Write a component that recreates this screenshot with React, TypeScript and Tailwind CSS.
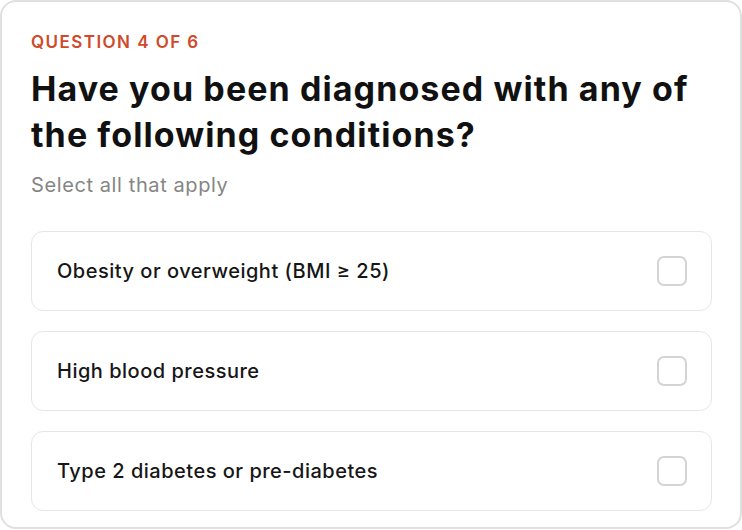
import { useState } from "react"

const options = [
  "Obesity or overweight (BMI ≥ 25)",
  "High blood pressure",
  "Type 2 diabetes or pre-diabetes",
]

export default function App() {
  const [checked, setChecked] = useState<string[]>([])

  const toggle = (label: string) =>
    setChecked((prev) =>
      prev.includes(label) ? prev.filter((l) => l !== label) : [...prev, label]
    )

  return (
    <div
      className="h-[530px] w-[742px] bg-white"
      style={{ fontFamily: "Inter, 'Noto Sans', sans-serif" }}
    >
      <div className="box-border h-[529px] w-[742px] rounded-[16px] border-2 border-[#e0e0e0] bg-white px-[29px] pt-[28px]">
        <p className="text-[17px] font-semibold uppercase leading-[24px] tracking-[0.085em] text-[#cf4a2a]">
          Question 4 of 6
        </p>
        <h1 className="mt-[12px] text-[34px] font-bold leading-[46px] tracking-[0.032em] text-[#111111]">
          Have you been diagnosed with any of the following conditions?
        </h1>
        <p className="mt-[13px] text-[20px] leading-[28px] tracking-[0.03em] text-[#858585]">
          Select all that apply
        </p>

        <div className="mt-[32px] flex flex-col gap-[20px]">
          {options.map((label) => {
            const on = checked.includes(label)
            return (
              <button
                key={label}
                onClick={() => toggle(label)}
                className="flex h-[80px] w-[681px] items-center justify-between rounded-[12px] border border-[#e6e6e6] bg-white pl-[25px] pr-[24px] text-left"
              >
                <span className="text-[20px] font-medium tracking-[0.025em] text-[#161616]">{label}</span>
                <span
                  className={
                    on
                      ? "h-[30px] w-[30px] rounded-[7px] border-2 border-[#cf4a2a] bg-[#cf4a2a]"
                      : "h-[30px] w-[30px] rounded-[7px] border-2 border-[#d4d4d4] bg-white"
                  }
                />
              </button>
            )
          })}
        </div>
      </div>
    </div>
  )
}
